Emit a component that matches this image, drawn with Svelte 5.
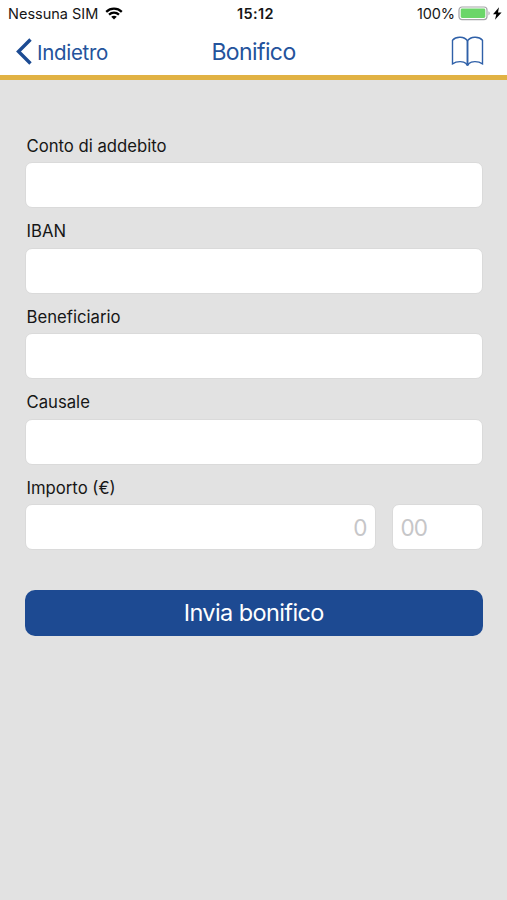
<script>
  const fields = ['Conto di addebito', 'IBAN', 'Beneficiario', 'Causale'];
</script>

<main>
  <header>
    <div class="status">
      <div class="carrier">
        <span>Nessuna SIM</span>
        <svg width="18" height="13" viewBox="0 0 18 13" fill="none" stroke="#000" stroke-width="2.3">
          <path d="M1.2 4.8C5.7 .6 12.3 .6 16.8 4.8" />
          <path d="M4 7.7c2.9-2.6 7.1-2.6 10 0" />
          <path d="M9 12.6 6.2 9.8c1.6-1.5 4-1.5 5.6 0z" fill="#000" stroke="none" />
        </svg>
      </div>
      <span class="time">15:12</span>
      <div class="power">
        <span>100%</span>
        <svg width="45" height="15" viewBox="0 0 45 15">
          <rect x="1" y="1" width="28" height="12.6" rx="3" fill="#fff" stroke="#a5a5a8" stroke-width="1.2" />
          <rect x="2.7" y="2.6" width="24.6" height="9.4" rx="1.4" fill="#6bd669" />
          <path d="M30.5 5.2c1.6.7 1.6 3.5 0 4.2z" fill="#a5a5a8" />
          <path d="M41 1.3 35 8.2h3.3L37 13.7l6.6-7.3H40z" fill="#000" />
        </svg>
      </div>
    </div>
    <nav>
      <button class="back">
        <svg width="17" height="27" viewBox="0 0 17 27" fill="none" stroke="#1c4b93" stroke-width="3.4">
          <path d="M15.5 1.5 3.5 13.5l12 12" />
        </svg>
        <span>Indietro</span>
      </button>
      <h1>Bonifico</h1>
      <button class="book" aria-label="Rubrica">
        <svg width="33" height="31" viewBox="0 0 33 31" fill="none" stroke="#2f60a8" stroke-width="1.4">
          <path d="M16.5 4.8C13.5.4 5.2-.1 1.5 4.2v23.6c4.3-2.9 11-2.9 13.6-.3.4 1.2.8 1.7 1.4 1.7s1-.5 1.4-1.7c2.6-2.6 9.3-2.6 13.6.3V4.2C27.8-.1 19.5.4 16.5 4.8z" />
          <path d="M16.5 4.8v24" stroke-width="1.9" />
        </svg>
      </button>
    </nav>
  </header>

  <form>
    {#each fields as name}
      <label>
        <span>{name}</span>
        <input type="text" />
      </label>
    {/each}
    <div class="amount">
      <label class="units">
        <span>Importo (€)</span>
        <input type="text" placeholder="0" />
      </label>
      <input class="cents" type="text" placeholder="00" aria-label="Centesimi" />
    </div>
    <button class="send" type="button">Invia bonifico</button>
  </form>
</main>

<style>
  :global(body) { background: #e2e2e2; }
  main {
    box-sizing: border-box;
    min-height: 900px;
    background: #e2e2e2;
    color: #161616;
    font-family: Inter, "Liberation Sans", sans-serif;
  }
  button {
    margin: 0;
    padding: 0;
    border: 0;
    background: none;
    color: #24539c;
    font-family: inherit;
  }
  svg { display: block; flex: none; }
  header {
    box-sizing: border-box;
    height: 79.5px;
    background: #fff;
    border-bottom: 5px solid #e1b244;
  }
  .status {
    display: grid;
    grid-template-columns: 1fr auto 1fr;
    align-items: center;
    height: 27px;
    padding: 0 4px 0 8px;
    font-size: 14.5px;
  }
  .carrier, .power { display: flex; align-items: center; }
  .carrier { gap: 7px; }
  .power { justify-content: flex-end; gap: 3px; letter-spacing: -0.1px; }
  .time { font-weight: 600; letter-spacing: 0.4px; }
  nav {
    display: grid;
    grid-template-columns: 1fr auto 1fr;
    align-items: center;
    height: 49px;
    padding: 0 23px 0 15px;
  }
  .back { display: flex; align-items: center; gap: 5px; font-size: 20.5px; letter-spacing: -0.3px; }
  .back span { padding-top: 1px; }
  .book { justify-self: end; }
  h1 {
    margin: 0 -4px 0 4px;
    color: #24539c;
    font-size: 23px;
    font-weight: 400;
    letter-spacing: -0.6px;
  }
  form {
    display: flex;
    flex-direction: column;
    gap: 12px;
    padding: 55.2px 24.5px 0 25px;
  }
  label { display: flex; flex-direction: column; gap: 5.5px; }
  label span { padding-left: 1.5px; font-size: 16.7px; line-height: 22px; }
  input {
    box-sizing: border-box;
    width: 100%;
    height: 46px;
    margin: 0;
    padding: 0 8px;
    border: 1px solid #dadada;
    border-radius: 7px;
    background: #fff;
    font-family: inherit;
    font-size: 22.5px;
    letter-spacing: -1px;
  }
  input::placeholder { color: #c6c6c8; opacity: 1; }
  .amount { display: flex; align-items: flex-end; gap: 16px; }
  .units { flex: 1; }
  .units input { text-align: right; }
  .cents { width: 91px; }
  .send {
    height: 46.5px;
    margin-top: 27.5px;
    border-radius: 10px;
    background: #1d4a92;
    color: #fff;
    font-size: 23.5px;
    letter-spacing: -0.6px;
  }
</style>
